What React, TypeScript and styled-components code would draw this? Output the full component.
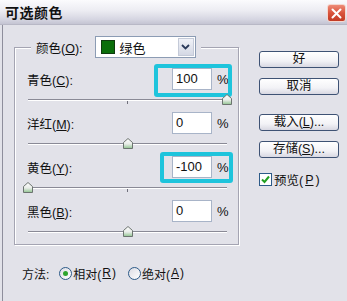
import styled, { createGlobalStyle } from 'styled-components'

type ChannelType = {
	name: string
	hotkey: string
	value: number
	highlight?: { left: number; top: number; width: number; height: number }
}

const channels: ChannelType[] = [
	{ name: '青色', hotkey: 'C', value: 100, highlight: { left: 139, top: -4, width: 78, height: 33 } },
	{ name: '洋红', hotkey: 'M', value: 0 },
	{ name: '黄色', hotkey: 'Y', value: -100, highlight: { left: 145, top: -4, width: 73, height: 31 } },
	{ name: '黑色', hotkey: 'B', value: 0 },
]

const GlobalStyle = createGlobalStyle`
	html, body {
		margin: 0;
		padding: 0;
	}
	body {
		background: #e2e2e9;
		font-family: 'Liberation Sans', 'Noto Sans CJK SC', sans-serif;
		font-size: 12px;
		color: #111;
	}
	u {
		text-underline-offset: 1px;
	}
`

const Window = styled.div`
	width: 347px;
	height: 301px;
	background: #e2e2e9;
	overflow: hidden;
	display: flex;
	flex-direction: column;
`

const TitleBar = styled.div`
	height: 24px;
	flex: none;
	display: flex;
	align-items: center;
	justify-content: space-between;
	padding: 0 1px 0 5px;
	background: linear-gradient(to bottom, #fbfbfd 0%, #ececf2 45%, #d6d6e2 80%, #c4c4d2 100%);
	border-bottom: 1px solid #b8b8c6;
`

const Title = styled.span`
	font-family: 'Noto Sans CJK SC', sans-serif;
	font-size: 14px;
	font-weight: 700;
	letter-spacing: 0.5px;
	line-height: 24px;
	color: #111;
`

const CloseButton = styled.div`
	width: 19px;
	height: 18px;
	margin-top: 2px;
	border-radius: 3px;
	border: 1px solid #f4d8d0;
	box-sizing: border-box;
	background: linear-gradient(to bottom, #ee8c78 0%, #d9533c 50%, #c23a24 100%);
	display: flex;
	align-items: center;
	justify-content: center;
`

const Body = styled.div`
	flex: 1;
	display: flex;
	gap: 20px;
	margin-left: 2px;
	border-left: 1px solid #8e8e9c;
	padding: 11px 0 0 11px;
`

const LeftColumn = styled.div`
	width: 225px;
	display: flex;
	flex-direction: column;
`

const GroupBox = styled.fieldset`
	box-sizing: border-box;
	width: 225px;
	margin: 0;
	padding: 10px 0 0 0;
	min-inline-size: 0;
	border: 1px solid #a4a4b2;
	box-shadow: 1px 1px 0 #fff, inset 1px 1px 0 #fff;
`

const Legend = styled.legend`
	display: flex;
	align-items: center;
	gap: 12px;
	margin-left: 16px;
	padding: 0 5px;
	height: 22px;
	background: #e2e2e9;
`

const Select = styled.div`
	box-sizing: border-box;
	width: 101px;
	height: 22px;
	border: 1px solid #8c9cb4;
	background: #fff;
	display: flex;
	align-items: center;
`

const Swatch = styled.span`
	width: 14px;
	height: 14px;
	box-sizing: border-box;
	margin-left: 5px;
	background: #0a6e0a;
	border: 1px solid #0e3a0e;
`

const SelectText = styled.span`
	flex: 1;
	margin-left: 5px;
	font-size: 13px;
`

const SelectArrow = styled.span`
	width: 16px;
	height: 18px;
	margin-right: 1px;
	box-sizing: border-box;
	border: 1px solid #c4cad8;
	background: linear-gradient(to bottom, #f0f2f8, #d4d8e4);
	display: flex;
	align-items: center;
	justify-content: center;
`

const Row = styled.div`
	position: relative;
	height: 22px;
	display: flex;
	align-items: center;
	padding: 0 10px 0 12px;
`

const Label = styled.span`
	flex: 1;
	font-size: 12.5px;
`

const NumberBox = styled.div`
	box-sizing: border-box;
	width: 40px;
	height: 22px;
	border: 1px solid #a8b4c8;
	background: #fff;
	padding-left: 3px;
	font-size: 13px;
	line-height: 20px;
`

const Percent = styled.span`
	width: 11px;
	margin-left: 5px;
	font-size: 13px;
`

const Highlight = styled.div`
	position: absolute;
	box-sizing: border-box;
	border: 4px solid #1ec4dc;
	border-radius: 3px;
	pointer-events: none;
`

const Slider = styled.div`
	position: relative;
	width: 199px;
	height: 22px;
	margin-left: 13px;
`

const Track = styled.div`
	position: relative;
	top: 9px;
	height: 0;
	border-top: 1px solid #8a8a96;
	border-bottom: 1px solid #fff;

	&::after {
		content: '';
		position: absolute;
		left: 99px;
		top: 1px;
		width: 1px;
		height: 3px;
		background: #70707c;
	}
`

const Thumb = styled.svg`
	position: absolute;
	top: 4px;
	width: 10px;
	height: 11px;
`

const MethodRow = styled.div`
	display: flex;
	align-items: center;
	height: 18px;
	margin-top: 19px;
	padding-left: 8px;
	font-size: 12px;
`

const MethodLabel = styled.span`
	margin-right: 10px;
`

const RadioOption = styled.span`
	display: flex;
	align-items: center;
	gap: 1px;
	margin-right: 12px;
`

const Radio = styled.span<{ $checked?: boolean }>`
	box-sizing: border-box;
	width: 13px;
	height: 13px;
	border-radius: 50%;
	border: 1px solid #2c5a88;
	background: linear-gradient(135deg, #dcdce4, #fff);
	display: flex;
	align-items: center;
	justify-content: center;

	&::after {
		content: '';
		width: 5px;
		height: 5px;
		border-radius: 50%;
		background: ${p => (p.$checked ? '#2ea52e' : 'transparent')};
	}
`

const RightColumn = styled.div`
	width: 80px;
	display: flex;
	flex-direction: column;
	padding-top: 15px;
`

const Button = styled.div<{ $gap: number }>`
	box-sizing: border-box;
	width: 80px;
	height: 17px;
	margin-top: ${p => p.$gap}px;
	border: 1px solid #3e5274;
	border-radius: 3px;
	background: linear-gradient(to bottom, #ffffff 0%, #f2f2f6 60%, #d8d8e2 100%);
	display: flex;
	align-items: center;
	justify-content: center;
	font-size: 12.5px;
	line-height: 15px;
`

const CheckRow = styled.div`
	display: flex;
	align-items: center;
	gap: 2px;
	margin-top: 12px;
	font-size: 12.5px;
`

const CheckBox = styled.span`
	box-sizing: border-box;
	width: 13px;
	height: 13px;
	border: 1px solid #2c5a88;
	background: #fff;
	display: flex;
	align-items: center;
	justify-content: center;
`

function SliderThumb({ value }: { value: number }) {
	const left = ((value + 100) / 200) * 199 - 5
	return (
		<Thumb viewBox='0 0 10 11' style={{ left }}>
			<defs>
				<linearGradient id='thumbFill' x1='0' y1='0' x2='0' y2='1'>
					<stop offset='0' stopColor='#ffffff' />
					<stop offset='0.55' stopColor='#e8ece8' />
					<stop offset='1' stopColor='#8fc48f' />
				</linearGradient>
			</defs>
			<path d='M5 0.5 L9.5 4.5 L9.5 10.5 L0.5 10.5 L0.5 4.5 Z' fill='url(#thumbFill)' stroke='#6c7470' strokeWidth='1' />
		</Thumb>
	)
}

function App() {
	return (
		<>
			<GlobalStyle />
			<Window>
				<TitleBar>
					<Title>可选颜色</Title>
					<CloseButton>
						<svg width='11' height='11' viewBox='0 0 11 11'>
							<path d='M1.5 1.5 L9.5 9.5 M9.5 1.5 L1.5 9.5' stroke='#fff' strokeWidth='2' strokeLinecap='round' />
						</svg>
					</CloseButton>
				</TitleBar>
				<Body>
					<LeftColumn>
						<GroupBox>
							<Legend>
								<Label>
									颜色(<u>O</u>):
								</Label>
								<Select>
									<Swatch />
									<SelectText>绿色</SelectText>
									<SelectArrow>
										<svg width='9' height='6' viewBox='0 0 9 6'>
											<path d='M1 1 L4.5 4.5 L8 1' fill='none' stroke='#2a3a5a' strokeWidth='1.8' />
										</svg>
									</SelectArrow>
								</Select>
							</Legend>
							{channels.map(ch => (
								<div key={ch.hotkey}>
									<Row>
										<Label>
											{ch.name}(<u>{ch.hotkey}</u>):
										</Label>
										<NumberBox>{ch.value}</NumberBox>
										<Percent>%</Percent>
										{ch.highlight && <Highlight style={ch.highlight} />}
									</Row>
									<Slider>
										<Track />
										<SliderThumb value={ch.value} />
									</Slider>
								</div>
							))}
						</GroupBox>
						<MethodRow>
							<MethodLabel>方法:</MethodLabel>
							<RadioOption>
								<Radio $checked />
								相对(<u>R</u>)
							</RadioOption>
							<RadioOption>
								<Radio />
								绝对(<u>A</u>)
							</RadioOption>
						</MethodRow>
					</LeftColumn>
					<RightColumn>
						<Button $gap={0}>好</Button>
						<Button $gap={10}>取消</Button>
						<Button $gap={19}>
							载入(<u>L</u>)...
						</Button>
						<Button $gap={10}>
							存储(<u>S</u>)...
						</Button>
						<CheckRow>
							<CheckBox>
								<svg width='9' height='9' viewBox='0 0 9 9'>
									<path d='M1 4.5 L3.5 7 L8 1.5' fill='none' stroke='#22a022' strokeWidth='2' />
								</svg>
							</CheckBox>
							预览(<u>P</u>)
						</CheckRow>
					</RightColumn>
				</Body>
			</Window>
		</>
	)
}

export default App
